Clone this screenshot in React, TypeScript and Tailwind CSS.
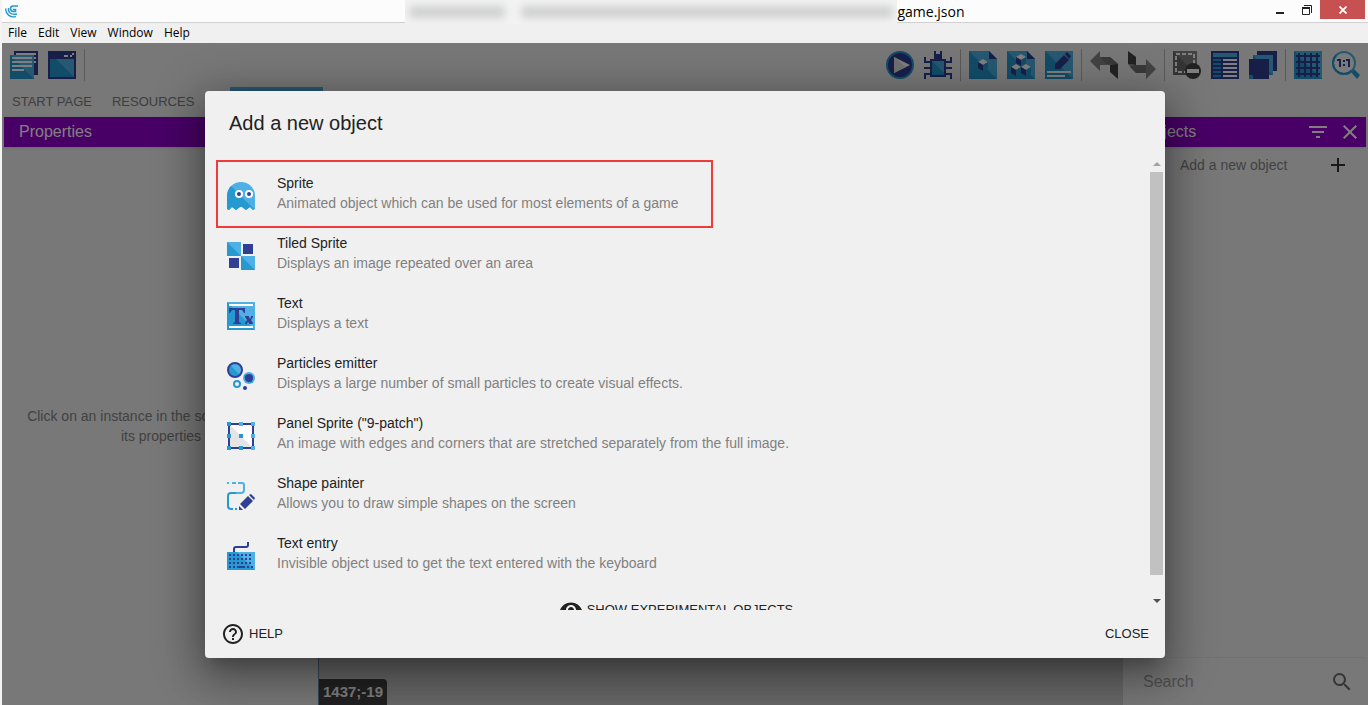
import React from "react";
import { MdAdd, MdClose, MdFilterList, MdHelpOutline, MdSearch, MdVisibility } from "react-icons/md";

const LIGHT = "#4fb0e5";
const MID = "#2599d0";
const DARK = "#2f3f93";

function Icon({ children }: { children: React.ReactNode }) {
  return (
    <svg width="28" height="28" viewBox="0 0 28 28" aria-hidden="true" className="block shrink-0">
      {children}
    </svg>
  );
}

const Cube = ({ x, y }: { x: number; y: number }) => (
  <g transform={`translate(${x} ${y})`}>
    <path d="M0 3 5 0l5 3-5 3z" fill="#fff" />
    <path d="M0 3l5 3v6L0 9z" fill={DARK} />
    <path d="M10 3 5 6v6l5-3z" fill={MID} />
  </g>
);

const Sheet = () => (
  <>
    <path d="M0 0h20l8 8v20H0z" fill={LIGHT} />
    <path d="M0 0l28 28H0z" fill={MID} />
    <path d="M20 0l8 8h-8z" fill={DARK} />
  </>
);

const ScenesIcon = () => (
  <Icon>
    <path d="M4 0h24v24H4z" fill={DARK} />
    <path d="M6 2h20v2H6zM24 6h2v2h-2zM24 10h2v2h-2z" fill="#fff" />
    <path d="M0 4h24v24H0z" fill={MID} />
    <path d="M0 4h24v24z" fill={LIGHT} />
    <path d="M2 6h20v2H2zM2 10h20v2H2zM2 14h20v2H2zM2 18h12v2H2z" fill="#fff" />
  </Icon>
);

const WindowIcon = () => (
  <Icon>
    <path d="M0 0h28v28H0z" fill={DARK} />
    <path d="M2 8h24v18H2z" fill={MID} />
    <path d="M8 8h18v18z" fill={LIGHT} />
    <path d="M16 4h4v2h-4zM22 4h2v2h-2zM24 2h2v2h-2z" fill="#fff" />
  </Icon>
);

const PlayIcon = () => (
  <Icon>
    <circle cx="14" cy="14" r="14" fill={MID} />
    <circle cx="14" cy="14" r="12" fill={DARK} />
    <path d="M8 6l16 8-16 8z" fill="#fff" />
    <path d="M8 6l12 10-12 6z" fill="#e2e2e2" />
  </Icon>
);

const BugIcon = () => (
  <Icon>
    <path
      d="M10 0h2v3h4V0h2v8h4v2h4V6h2v6h-6v4h6v2h-6v4h6v6h-2v-4h-4v2H6v-2H2v4H0v-6h6v-4H0v-2h6v-4H0V6h2v4h4V8h4z"
      fill={DARK}
    />
    <path d="M8 10h12v14H8z" fill={MID} />
    <path d="M8 10h12v12z" fill={LIGHT} />
  </Icon>
);

const ObjectIcon = () => (
  <Icon>
    <Sheet />
    <Cube x={9} y={8} />
  </Icon>
);

const GroupIcon = () => (
  <Icon>
    <Sheet />
    <Cube x={9} y={3} />
    <Cube x={4} y={13} />
    <Cube x={14} y={13} />
  </Icon>
);

const EditIcon = () => (
  <Icon>
    <path d="M0 0h28v28H0z" fill={MID} />
    <path d="M0 0h28v28z" fill={LIGHT} />
    <path d="M10 18v-5l9-9 5 5-9 9zM20 3l2-2 4 4-2 3z" fill={DARK} />
    <path d="M2 20h24v2H2zM2 24h18v2H2z" fill="#fff" />
  </Icon>
);

const UndoIcon = () => (
  <Icon>
    <path d="M0 10L10 0v6h10l8 7v8l-8-7H10v6z" fill="#868686" />
    <path d="M10 6h10l8 7H16z" fill="#737373" />
    <path d="M20 14l8-1v15l-8-7z" fill="#444" />
  </Icon>
);

const RedoIcon = () => (
  <Icon>
    <path d="M28 18L18 8v6H8l-8-1 8 9h10v6z" fill="#868686" />
    <path d="M8 14h10v8H8l-6-6z" fill="#737373" />
    <path d="M0 0l8 6v8l-8-1z" fill="#444" />
  </Icon>
);

const MaskIcon = () => (
  <Icon>
    <path d="M0 0h24v24H0z" fill="#6a6a6a" />
    <path d="M0 0h24v24z" fill="#858585" />
    <path d="M3 3h18v18H3z" fill="none" stroke="#fff" strokeWidth="2" strokeDasharray="4 2" />
    <circle cx="20" cy="20" r="8" fill="#444" />
    <path d="M14 18h12v4H14z" fill="#fff" />
  </Icon>
);

const ListIcon = () => (
  <Icon>
    <path d="M0 0h28v28H0z" fill={DARK} />
    <path d="M2 2h24v4H2z" fill={LIGHT} />
    <path d="M2 8h8v2H2zM2 12h8v2H2zM2 16h8v2H2zM2 20h8v2H2zM2 24h8v2H2z" fill={MID} />
    <path d="M12 8h14v2H12zM12 12h14v2H12zM12 16h14v2H12zM12 20h14v2H12zM12 24h14v2H12z" fill="#fff" />
  </Icon>
);

const LayersIcon = () => (
  <Icon>
    <path d="M8 0h20v20H8z" fill={DARK} />
    <path d="M4 4h20v20H4z" fill={MID} />
    <path d="M4 4h20v20z" fill={LIGHT} />
    <path d="M0 8h20v20H4l-4-4z" fill={DARK} />
    <path d="M0 24h4v4H0z" fill={MID} />
  </Icon>
);

const GridIcon = () => (
  <Icon>
    <path d="M0 0h28v28H0z" fill={MID} />
    <path d="M0 0h28v28z" fill={LIGHT} />
    <path d="M5 2v24M11 2v24M17 2v24M23 2v24M2 5h24M2 11h24M2 17h24M2 23h24" stroke={DARK} strokeWidth="2" />
  </Icon>
);

const ZoomIcon = () => (
  <Icon>
    <path d="M19 21l3-3 6 6-3 4z" fill={MID} />
    <circle cx="12" cy="12" r="11" fill="#f4f4f4" stroke={LIGHT} strokeWidth="2" />
    <path d="M4.200 4.200a11 11 0 0 0 15.600 15.600" fill="none" stroke={MID} strokeWidth="2" />
    <path d="M5 8h4v8H7v-6H5zM11 9h2v2h-2zM11 13h2v2h-2zM14 8h4v8h-2v-6h-2z" fill={DARK} />
  </Icon>
);

const SpriteIcon = () => (
  <Icon>
    <path d="M0 14a14 14 0 0 1 28 0v13l-2 1-3-3-4 3-4-3h-2l-4 3-4-3-3 3-2-1z" fill={LIGHT} />
    <path d="M4 4l23 23-1 1-3-3-4 3-4-3h-2l-4 3-4-3-3 3-2-1V14C0 10 2 6 4 4z" fill={MID} />
    <circle cx="12" cy="12" r="4" fill="#fff" />
    <circle cx="22" cy="12" r="4" fill="#fff" />
    <circle cx="12" cy="12" r="2" fill={DARK} />
    <circle cx="22" cy="12" r="2" fill={DARK} />
  </Icon>
);

const TiledIcon = () => (
  <Icon>
    <path d="M0 0h14v14H0zM14 14h14v14H14z" fill={LIGHT} />
    <path d="M0 0l14 14H0zM14 14l14 14H14z" fill={MID} />
    <path d="M16 2h10v10H16zM2 16h10v10H2z" fill={DARK} />
  </Icon>
);

const TextIcon = () => (
  <Icon>
    <path d="M0 0h28v28H0z" fill={MID} />
    <path d="M0 0h28v28z" fill={LIGHT} />
    <path d="M2 2h24v2H2zM2 24h24v2H2z" fill="#fff" />
    <path
      d="M2 6h16v5h-1l-2-3h-3v12l2 1v1H6v-1l2-1V8H5l-2 3H2zM18 14h4v1l1 2 1-2v-1h2v1l-2 3 2 3v1h-4v-1l-1-1-1 1v1h-2v-1l2-3-2-3z"
      fill={DARK}
    />
  </Icon>
);

const ParticlesIcon = () => (
  <Icon>
    <circle cx="8" cy="8" r="7" fill={MID} />
    <path d="M3 3a7 7 0 0 1 10 10z" fill={LIGHT} />
    <circle cx="8" cy="8" r="7" fill="none" stroke={DARK} strokeWidth="2" />
    <circle cx="22" cy="16" r="6" fill={LIGHT} />
    <path d="M18 12a6 6 0 0 0 8 8z" fill={MID} />
    <circle cx="22" cy="16" r="4" fill={DARK} />
    <circle cx="10" cy="22" r="3" fill="none" stroke={MID} strokeWidth="2" />
    <circle cx="18" cy="26" r="2" fill={DARK} />
  </Icon>
);

const PanelIcon = () => (
  <Icon>
    <path d="M2 2h24v24H2z" fill="#e4e4e4" />
    <path d="M2 2h24v24z" fill="#fff" />
    <path d="M2 2h24v24H2z" fill="none" stroke={DARK} strokeWidth="2" />
    <path d="M12 0h4v4h-4zM24 0h4v4h-4zM24 12h4v4h-4zM24 24h4v4h-4z" fill={LIGHT} />
    <path d="M0 0h4v4H0zM0 12h4v4H0zM0 24h4v4H0zM12 24h4v4h-4zM12 12h4v4h-4z" fill={MID} />
  </Icon>
);

const ShapeIcon = () => (
  <Icon>
    <path d="M0 1h2M5 1h4M11 1h4a2 2 0 0 1 2 2v5a3 3 0 0 1-3 3H9" fill="none" stroke={LIGHT} strokeWidth="2" />
    <path d="M9 11H4a3 3 0 0 0-3 3v10a3 3 0 0 0 3 3h2M8 27h2" fill="none" stroke={MID} strokeWidth="2" />
    <path d="M12 28v-4l4 4zM13 22l8-8 5 5-8 8zM22 13l2-1 4 4-1 2z" fill={DARK} />
  </Icon>
);

const KeyboardIcon = () => (
  <Icon>
    <path d="M7 10V7a2 2 0 0 1 2-2h10a2 2 0 0 0 2-2V0" fill="none" stroke={DARK} strokeWidth="2" />
    <path d="M0 10h28v18H0z" fill={MID} />
    <path d="M10 10h18v18z" fill={LIGHT} />
    <path d="M2 13h24M2 17h24M2 21h24" stroke={DARK} strokeWidth="2" strokeDasharray="2 2" />
    <path d="M2 25h2M6 25h2M10 25h8M20 25h2M24 25h2" stroke={DARK} strokeWidth="2" />
  </Icon>
);

const leftTools = [
  { label: "Project manager", icon: <ScenesIcon /> },
  { label: "Preview window", icon: <WindowIcon /> },
];

const toolGroups = [
  [
    { label: "Preview", icon: <PlayIcon /> },
    { label: "Debug", icon: <BugIcon /> },
  ],
  [
    { label: "Objects editor", icon: <ObjectIcon /> },
    { label: "Object groups", icon: <GroupIcon /> },
    { label: "Properties panel", icon: <EditIcon /> },
  ],
  [
    { label: "Undo", icon: <UndoIcon /> },
    { label: "Redo", icon: <RedoIcon /> },
  ],
  [
    { label: "Delete selection", icon: <MaskIcon /> },
    { label: "Instances list", icon: <ListIcon /> },
    { label: "Layers", icon: <LayersIcon /> },
  ],
  [
    { label: "Toggle grid", icon: <GridIcon /> },
    { label: "Zoom", icon: <ZoomIcon /> },
  ],
];

const objectTypes = [
  { name: "Sprite", text: "Animated object which can be used for most elements of a game", icon: <SpriteIcon /> },
  { name: "Tiled Sprite", text: "Displays an image repeated over an area", icon: <TiledIcon /> },
  { name: "Text", text: "Displays a text", icon: <TextIcon /> },
  {
    name: "Particles emitter",
    text: "Displays a large number of small particles to create visual effects.",
    icon: <ParticlesIcon />,
  },
  {
    name: 'Panel Sprite ("9-patch")',
    text: "An image with edges and corners that are stretched separately from the full image.",
    icon: <PanelIcon />,
  },
  { name: "Shape painter", text: "Allows you to draw simple shapes on the screen", icon: <ShapeIcon /> },
  { name: "Text entry", text: "Invisible object used to get the text entered with the keyboard", icon: <KeyboardIcon /> },
];

const Separator = () => <div className="mx-[3px] h-8 w-px bg-[#b4b4b4]" />;

function ToolButton({ label, icon }: { label: string; icon: React.ReactNode }) {
  return (
    <button type="button" aria-label={label} className="p-[5px]">
      {icon}
    </button>
  );
}

function TitleBar() {
  return (
    <header className="font-['Open_Sans',sans-serif] text-black">
      <div className="flex h-[23px] items-start border-b border-[#d0d0d0] bg-[#fcfcfc]">
        <div className="flex flex-1 pt-1 pl-[3px]">
          <svg width="14" height="14" viewBox="0 0 14 14" aria-hidden="true" fill="none" stroke="#2599d0">
            <path d="M13 2H8C5 2 4.500 7 8 7.500h2.500V5.500H8" strokeWidth="1.600" />
            <path d="M3.500 4C3 9 6 11 12 10" strokeWidth="1.400" />
            <path d="M.7 4.500C.5 10 5 14 11 12.600" strokeWidth="1.400" />
          </svg>
        </div>
        <div className="flex h-6 items-center text-sm">
          <div aria-hidden="true" className="flex h-6 w-[492px] items-center gap-4 overflow-hidden bg-[#f3f3f3] px-1">
            <span className="h-3 w-[96px] rounded bg-[#cdcfce] blur-xs" />
            <span className="h-3 flex-1 rounded bg-[#cdcfce] blur-xs" />
          </div>
          <span>game.json</span>
        </div>
        <div className="flex flex-1 justify-end pr-[3px]">
          <button type="button" aria-label="Minimize" className="flex h-[19px] w-7 items-center justify-center">
            <svg width="8" height="10" viewBox="0 0 8 10">
              <path d="M0 7h8v2H0z" fill="#222" />
            </svg>
          </button>
          <button type="button" aria-label="Restore" className="flex h-[19px] w-[26px] items-center justify-center">
            <svg width="10" height="10" viewBox="0 0 10 10" fill="none" stroke="#222">
              <path d="M2 .5h7.500V8" />
              <path d="M.5 3h7v6.500h-7z" />
              <path d="M0 3h8" strokeWidth="2" />
            </svg>
          </button>
          <button
            type="button"
            aria-label="Close window"
            className="flex h-[19px] w-[45px] items-center justify-center bg-[#c75050]"
          >
            <svg width="8" height="8" viewBox="0 0 8 8" stroke="#fff" strokeWidth="1.800">
              <path d="M.5.5l7 7M7.500.5l-7 7" />
            </svg>
          </button>
        </div>
      </div>
      <nav aria-label="Application menu" className="flex h-5 items-center gap-[11px] bg-[#f0f0f0] px-1.5 text-xs">
        <button type="button">File</button>
        <button type="button">Edit</button>
        <button type="button">View</button>
        <button type="button">Window</button>
        <button type="button">Help</button>
      </nav>
    </header>
  );
}

function Toolbar() {
  return (
    <div role="toolbar" aria-label="Editor tools" className="flex h-11 items-center justify-between px-[3px]">
      <div className="flex items-center">
        {leftTools.map((tool) => (
          <ToolButton key={tool.label} {...tool} />
        ))}
        <Separator />
      </div>
      <div className="flex items-center">
        {toolGroups.map((group, index) => (
          <div key={group[0].label} className="flex items-center">
            {index > 0 && <Separator />}
            {group.map((tool) => (
              <ToolButton key={tool.label} {...tool} />
            ))}
          </div>
        ))}
      </div>
    </div>
  );
}

function Workspace() {
  return (
    <div className="flex h-full flex-col bg-[#f0f0f0]">
      <Toolbar />
      <div role="tablist" className="flex h-[30px] items-stretch pl-2.5 text-[13px] text-[#7c7c7c]">
        <button type="button" role="tab" className="mr-5">
          START PAGE
        </button>
        <button type="button" role="tab" className="mr-9">
          RESOURCES
        </button>
        <button type="button" role="tab" aria-selected="true" aria-label="Scene" className="w-[93px] border-t-4 border-[#4fb0e5]" />
      </div>
      <div className="flex min-h-0 flex-1">
        <section className="flex w-[317px] flex-col border-r border-[#6a8fb0] pl-0.5">
          <h2 className="flex h-[30px] items-center bg-[#9100ce] px-[15px] text-base text-white shadow">Properties</h2>
          <p className="flex flex-1 items-center justify-center px-4 text-center text-sm leading-5 text-[#858585]">
            Click on an instance in the scene to display its properties
          </p>
        </section>
        <main className="flex flex-1 items-end bg-[#d1d1d1]">
          <div className="flex h-[26px] items-center rounded-tr bg-[#424242] px-1 text-[15px] font-bold text-white">1437;-19</div>
        </main>
        <section className="flex w-[245px] flex-col pr-0.5">
          <h2 className="ml-1 flex h-[30px] items-center gap-2 bg-[#9100ce] pr-1 pl-[15px] text-base text-white shadow">
            <span className="flex-1">Objects</span>
            <button type="button" aria-label="Filter objects">
              <MdFilterList size={24} />
            </button>
            <button type="button" aria-label="Close panel">
              <MdClose size={24} />
            </button>
          </h2>
          <button type="button" className="flex h-9 items-center justify-between pr-4 pl-[57px] text-sm text-[#858585]">
            Add a new object
            <MdAdd size={24} color="#333" />
          </button>
          <div className="flex-1" />
          <label className="ml-1 flex h-12 items-center rounded border-t border-[#e4e4e4] pr-3 pl-4">
            <input
              type="text"
              aria-label="Search"
              placeholder="Search"
              className="min-w-0 flex-1 bg-transparent text-base outline-none placeholder:text-[#a0a0a0]"
            />
            <MdSearch size={24} color="#6a6a6a" />
          </label>
        </section>
      </div>
    </div>
  );
}

function NewObjectDialog() {
  return (
    <div className="absolute inset-0 flex justify-center bg-black/50 pt-12 pb-[47px]">
      <div
        role="dialog"
        aria-labelledby="dialog-title"
        className="flex w-full max-w-[960px] flex-col overflow-hidden rounded bg-[#f0f0f0] text-[#222] shadow-[0_11px_15px_-7px_rgba(0,0,0,0.2),0_24px_38px_3px_rgba(0,0,0,0.14),0_9px_46px_8px_rgba(0,0,0,0.3)]"
      >
        <h1 id="dialog-title" className="px-6 py-4 text-xl leading-8">
          Add a new object
        </h1>
        <div className="flex min-h-0 flex-1 pr-0.5">
          <div className="min-w-0 flex-1 overflow-y-auto pt-[5px] pl-[11px] [scrollbar-width:none]">
            <ul>
              {objectTypes.map((type, index) => (
                <li key={type.name}>
                  <button
                    type="button"
                    className={
                      index === 0
                        ? "-mb-0.5 flex h-[68px] w-[497px] items-center gap-[22px] border-2 border-[#ee3b3b] pt-1 pl-[9px] text-left"
                        : "flex h-[60px] w-full items-center gap-[22px] pl-[11px] text-left"
                    }
                  >
                    {type.icon}
                    <span className="flex flex-col pb-1.5 text-sm leading-5">
                      <span>{type.name}</span>
                      <span className="text-[#808080]">{type.text}</span>
                    </span>
                  </button>
                </li>
              ))}
            </ul>
            <div className="flex justify-center pr-3.5">
              <button type="button" className="flex h-12 items-center gap-1 text-[13px] leading-5">
                <MdVisibility size={24} />
                SHOW EXPERIMENTAL OBJECTS
              </button>
            </div>
          </div>
          <div aria-hidden="true" className="flex w-[13px] flex-col items-center pt-[6px] pb-[5px]">
            <svg width="8" height="11" viewBox="0 0 8 11">
              <path d="M0 5l4-4 4 4z" fill="#a3a3a3" />
            </svg>
            <div className="w-full flex-1 bg-[#c1c1c1]" />
            <svg width="8" height="30" viewBox="0 0 8 30">
              <path d="M0 24h8l-4 4z" fill="#505050" />
            </svg>
          </div>
        </div>
        <footer className="flex h-12 items-center justify-between px-4 text-[13px]">
          <button type="button" className="flex items-center gap-1">
            <MdHelpOutline size={24} />
            HELP
          </button>
          <button type="button">CLOSE</button>
        </footer>
      </div>
    </div>
  );
}

export default function App() {
  return (
    <div className="flex h-screen flex-col overflow-hidden border-l-2 border-[#f4f4f4] font-['Liberation_Sans',sans-serif]">
      <TitleBar />
      <div className="relative min-h-0 flex-1 overflow-hidden">
        <Workspace />
        <NewObjectDialog />
      </div>
    </div>
  );
}
